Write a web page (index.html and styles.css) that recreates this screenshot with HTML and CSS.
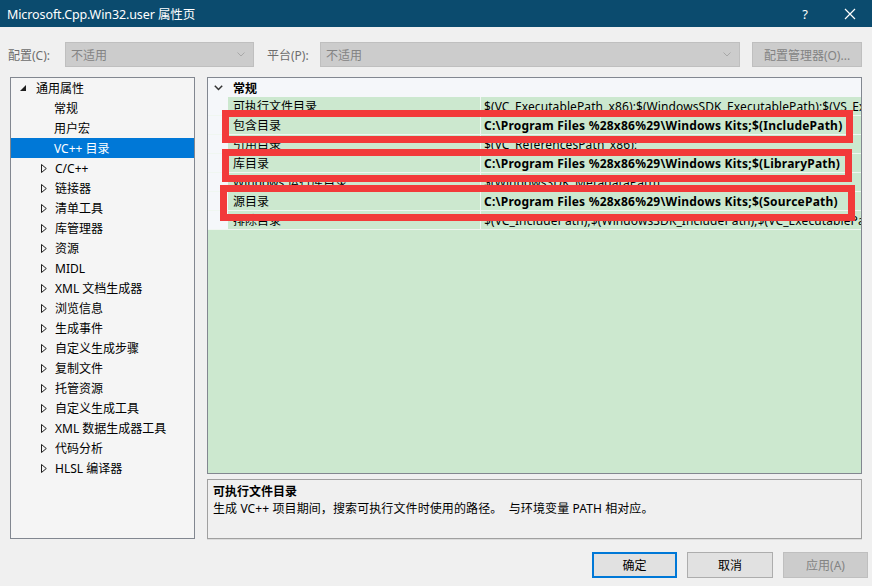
FILE: index.html
```html
<!DOCTYPE html>
<html>
<head>
<meta charset="utf-8">
<link rel="stylesheet" href="styles.css">
</head>
<body>
<div class="window">
  <div class="titlebar">
    <span class="title">Microsoft.Cpp.Win32.user 属性页</span>
    <div class="tb-btns">
      <span class="help">?</span>
      <svg class="close" width="12" height="12" viewBox="0 0 12 12"><path d="M1 1 L11 11 M11 1 L1 11" stroke="#fff" stroke-width="1.2" fill="none"/></svg>
    </div>
  </div>

  <div class="toolbar">
    <span class="lbl lbl1">配置(C):</span>
    <div class="combo combo1"><span>不适用</span><svg width="8" height="5" viewBox="0 0 8 5"><path d="M0.5 0.5 L4 4 L7.5 0.5" stroke="#a8a8a8" fill="none"/></svg></div>
    <span class="lbl lbl2">平台(P):</span>
    <div class="combo combo2"><span>不适用</span><svg width="8" height="5" viewBox="0 0 8 5"><path d="M0.5 0.5 L4 4 L7.5 0.5" stroke="#a8a8a8" fill="none"/></svg></div>
    <div class="btn cfgmgr">配置管理器(O)...</div>
  </div>

  <div class="main">
    <div class="tree">
      <div class="node top"><svg class="exp" width="6" height="6" viewBox="0 0 6 6"><path d="M6 0 L6 6 L0 6 Z" fill="#1e1e1e"/></svg><span>通用属性</span></div>
      <div class="node child"><span>常规</span></div>
      <div class="node child"><span>用户宏</span></div>
      <div class="node child sel"><span>VC++ 目录</span></div>
      <div class="node col"><svg class="tri" width="6" height="9" viewBox="0 0 6 9"><path d="M0.5 0.5 L5.3 4.5 L0.5 8.5 Z" stroke="#1e1e1e" fill="none"/></svg><span>C/C++</span></div>
      <div class="node col"><svg class="tri" width="6" height="9" viewBox="0 0 6 9"><path d="M0.5 0.5 L5.3 4.5 L0.5 8.5 Z" stroke="#1e1e1e" fill="none"/></svg><span>链接器</span></div>
      <div class="node col"><svg class="tri" width="6" height="9" viewBox="0 0 6 9"><path d="M0.5 0.5 L5.3 4.5 L0.5 8.5 Z" stroke="#1e1e1e" fill="none"/></svg><span>清单工具</span></div>
      <div class="node col"><svg class="tri" width="6" height="9" viewBox="0 0 6 9"><path d="M0.5 0.5 L5.3 4.5 L0.5 8.5 Z" stroke="#1e1e1e" fill="none"/></svg><span>库管理器</span></div>
      <div class="node col"><svg class="tri" width="6" height="9" viewBox="0 0 6 9"><path d="M0.5 0.5 L5.3 4.5 L0.5 8.5 Z" stroke="#1e1e1e" fill="none"/></svg><span>资源</span></div>
      <div class="node col"><svg class="tri" width="6" height="9" viewBox="0 0 6 9"><path d="M0.5 0.5 L5.3 4.5 L0.5 8.5 Z" stroke="#1e1e1e" fill="none"/></svg><span>MIDL</span></div>
      <div class="node col"><svg class="tri" width="6" height="9" viewBox="0 0 6 9"><path d="M0.5 0.5 L5.3 4.5 L0.5 8.5 Z" stroke="#1e1e1e" fill="none"/></svg><span>XML 文档生成器</span></div>
      <div class="node col"><svg class="tri" width="6" height="9" viewBox="0 0 6 9"><path d="M0.5 0.5 L5.3 4.5 L0.5 8.5 Z" stroke="#1e1e1e" fill="none"/></svg><span>浏览信息</span></div>
      <div class="node col"><svg class="tri" width="6" height="9" viewBox="0 0 6 9"><path d="M0.5 0.5 L5.3 4.5 L0.5 8.5 Z" stroke="#1e1e1e" fill="none"/></svg><span>生成事件</span></div>
      <div class="node col"><svg class="tri" width="6" height="9" viewBox="0 0 6 9"><path d="M0.5 0.5 L5.3 4.5 L0.5 8.5 Z" stroke="#1e1e1e" fill="none"/></svg><span>自定义生成步骤</span></div>
      <div class="node col"><svg class="tri" width="6" height="9" viewBox="0 0 6 9"><path d="M0.5 0.5 L5.3 4.5 L0.5 8.5 Z" stroke="#1e1e1e" fill="none"/></svg><span>复制文件</span></div>
      <div class="node col"><svg class="tri" width="6" height="9" viewBox="0 0 6 9"><path d="M0.5 0.5 L5.3 4.5 L0.5 8.5 Z" stroke="#1e1e1e" fill="none"/></svg><span>托管资源</span></div>
      <div class="node col"><svg class="tri" width="6" height="9" viewBox="0 0 6 9"><path d="M0.5 0.5 L5.3 4.5 L0.5 8.5 Z" stroke="#1e1e1e" fill="none"/></svg><span>自定义生成工具</span></div>
      <div class="node col"><svg class="tri" width="6" height="9" viewBox="0 0 6 9"><path d="M0.5 0.5 L5.3 4.5 L0.5 8.5 Z" stroke="#1e1e1e" fill="none"/></svg><span>XML 数据生成器工具</span></div>
      <div class="node col"><svg class="tri" width="6" height="9" viewBox="0 0 6 9"><path d="M0.5 0.5 L5.3 4.5 L0.5 8.5 Z" stroke="#1e1e1e" fill="none"/></svg><span>代码分析</span></div>
      <div class="node col"><svg class="tri" width="6" height="9" viewBox="0 0 6 9"><path d="M0.5 0.5 L5.3 4.5 L0.5 8.5 Z" stroke="#1e1e1e" fill="none"/></svg><span>HLSL 编译器</span></div>
    </div>

    <div class="rightcol">
      <div class="grid">
        <div class="ghead">
          <svg class="chev" width="9" height="6" viewBox="0 0 9 6"><path d="M0.8 0.8 L4.5 4.5 L8.2 0.8" stroke="#333" stroke-width="1.5" fill="none"/></svg>
          <span>常规</span>
        </div>
        <div class="grow"><div class="gut"></div><div class="name">可执行文件目录</div><div class="val">$(VC_ExecutablePath_x86);$(WindowsSDK_ExecutablePath);$(VS_ExecutablePath);$(MSBuild_ExecutablePath)</div></div>
        <div class="grow"><div class="gut"></div><div class="name">包含目录</div><div class="val b">C:\Program Files %28x86%29\Windows Kits;$(IncludePath)</div></div>
        <div class="grow"><div class="gut"></div><div class="name">引用目录</div><div class="val">$(VC_ReferencesPath_x86);</div></div>
        <div class="grow"><div class="gut"></div><div class="name">库目录</div><div class="val b">C:\Program Files %28x86%29\Windows Kits;$(LibraryPath)</div></div>
        <div class="grow"><div class="gut"></div><div class="name">Windows 运行库目录</div><div class="val">$(WindowsSDK_MetadataPath);</div></div>
        <div class="grow"><div class="gut"></div><div class="name">源目录</div><div class="val b">C:\Program Files %28x86%29\Windows Kits;$(SourcePath)</div></div>
        <div class="grow"><div class="gut"></div><div class="name">排除目录</div><div class="val">$(VC_IncludePath);$(WindowsSDK_IncludePath);$(VC_ExecutablePath_x86)</div></div>

        <div class="redbox r1"></div>
        <div class="redbox r2"></div>
        <div class="redbox r3"></div>
      </div>
      <div class="desc">
        <div class="dtitle">可执行文件目录</div>
        <div class="dtext">生成 VC++ 项目期间，搜索可执行文件时使用的路径。&nbsp; 与环境变量 PATH 相对应。</div>
      </div>
    </div>
  </div>

  <div class="footer">
    <div class="btn ok">确定</div>
    <div class="btn cancel">取消</div>
    <div class="btn apply">应用(A)</div>
  </div>
</div>
</body>
</html>
```

FILE: styles.css
```css
* { box-sizing: border-box; }
html, body { margin: 0; padding: 0; }
body {
  width: 872px;
  height: 586px;
  overflow: hidden;
  background: #f0f0f0;
  font-family: "Noto Sans", "Noto Sans CJK SC", sans-serif;
  font-size: 12px;
  color: #000;
}
.window { width: 872px; height: 586px; display: flex; flex-direction: column; }

.titlebar {
  height: 27px;
  background: #0b4b6e;
  color: #fff;
  display: flex;
  align-items: center;
  padding-left: 7px;
}
.title { font-size: 12.5px; letter-spacing: -0.1px; }
.tb-btns { margin-left: auto; display: flex; align-items: center; }
.help { font-size: 13px; margin-right: 36px; }
.close { margin-right: 16px; }

.toolbar {
  margin-top: 15px;
  height: 25px;
  display: flex;
  align-items: center;
  padding-left: 8px;
}
.lbl { color: #6d6d6d; }
.lbl1 { width: 57px; }
.lbl2 { width: 53px; }
.combo {
  height: 25px;
  background: #cccccc;
  border: 1px solid #bfbfbf;
  display: flex;
  align-items: center;
  padding: 0 8px 0 5px;
  color: #838383;
  justify-content: space-between;
}
.combo1 { width: 189px; margin-right: 13px; }
.combo2 { width: 420px; margin-right: 12px; }
.btn {
  height: 26px;
  display: flex;
  align-items: center;
  justify-content: center;
  border: 1px solid #adadad;
  background: #e1e1e1;
}
.cfgmgr { width: 110px; height: 25px; background: #cccccc; border-color: #bfbfbf; color: #838383; }

.main {
  margin-top: 10px;
  padding-left: 10px;
  display: flex;
  gap: 12px;
  height: 462px;
}
.tree {
  width: 185px;
  height: 462px;
  background: #f5f5f5;
  border: 1px solid #828790;
  padding: 0;
}
.node {
  height: 20px;
  display: flex;
  align-items: center;
  position: relative;
  white-space: nowrap;
}
.node.top { padding-left: 9px; }
.node.top .exp { margin-right: 10px; margin-top: -1px; }
.node.child { padding-left: 43px; }
.node.col { padding-left: 30px; }
.node.col .tri { margin-right: 8px; }
.node.sel { background: #0078d7; color: #fff; }

.rightcol { width: 655px; display: flex; flex-direction: column; gap: 5px; }
.grid {
  position: relative;
  height: 397px;
  border: 1px solid #828790;
  background: #cce8cf;
}
.ghead {
  height: 19px;
  background: #f5f7fa;
  display: flex;
  align-items: center;
  padding-left: 6px;
  font-weight: bold;
}
.ghead .chev { margin-right: 10px; }
.grow {
  height: 19px;
  display: flex;
  border-bottom: 1px solid #f0f6f1;
  background: #f5f7fa;
}
.gut { width: 20px; background: #f5f7fa; }
.name {
  width: 253px;
  background: #cce8cf;
  padding-left: 5px;
  padding-top: 1px;
  line-height: 18px;
  white-space: nowrap;
  overflow: hidden;
  border-right: 1px solid #f0f6f1;
}
.val {
  flex: 1;
  background: #cce8cf;
  padding-left: 3px;
  padding-top: 1px;
  line-height: 18px;
  white-space: nowrap;
  overflow: hidden;
  letter-spacing: 0.1px;
}
.val.b { font-weight: bold; letter-spacing: 0.22px; }

.redbox {
  position: absolute;
  border: 7px solid #f23a3a;
}
.r1 { left: 14px; top: 32px; width: 631px; height: 33px; }
.r2 { left: 14px; top: 71px; width: 630px; height: 33px; }
.r3 { left: 12px; top: 107px; width: 635px; height: 36px; }

.desc {
  height: 60px;
  border: 1px solid #a0a0a0;
  background: #f0f0f0;
  padding: 3px 5px;
  box-shadow: 0 1px 0 #dcdcdc;
}
.dtitle { font-weight: bold; line-height: 17px; }
.dtext { line-height: 17px; letter-spacing: 0.1px; }

.footer {
  margin-top: 13px;
  display: flex;
  justify-content: flex-end;
  gap: 10px;
  padding-right: 4px;
}
.ok { width: 85px; border: 2px solid #0078d7; }
.cancel { width: 86px; }
.apply { width: 85px; background: #cccccc; border-color: #bfbfbf; color: #838383; }
```
